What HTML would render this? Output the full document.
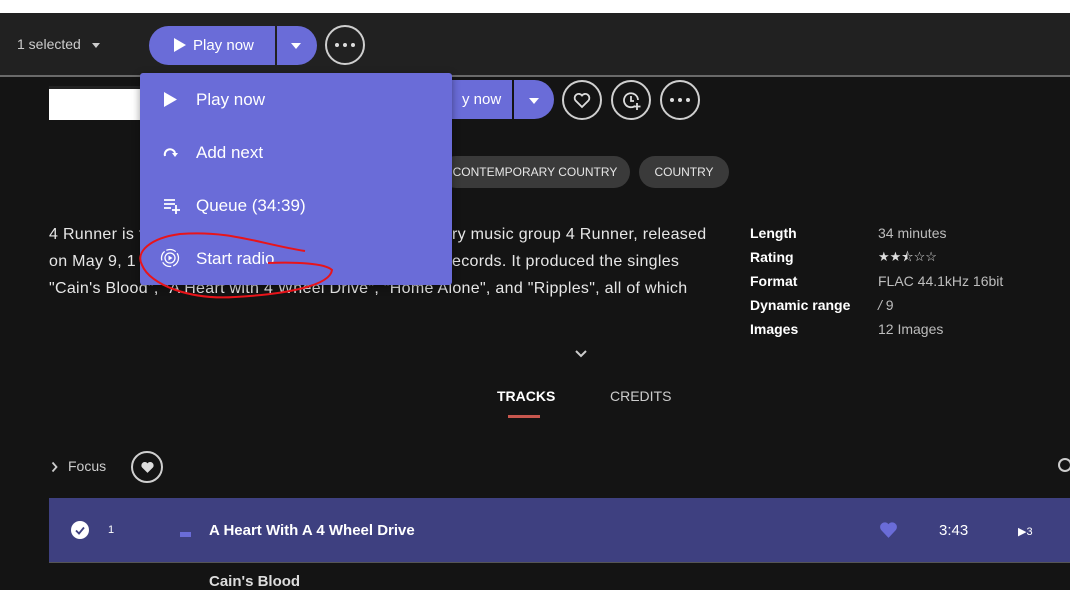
<!DOCTYPE html>
<html><head><meta charset="utf-8"><style>
*{margin:0;padding:0;box-sizing:border-box}
body{width:1070px;height:581px;overflow:hidden;background:#141414;font-family:"Liberation Sans",sans-serif;color:#e6e6e6;position:relative}
.a{position:absolute}
.circ{position:absolute;border:2px solid #cfcfcf;border-radius:50%}
.dots{position:absolute;left:50%;top:50%;transform:translate(-50%,-50%);display:flex;gap:4px}
.dots i{width:4px;height:4px;background:#ddd;border-radius:50%;display:block}
.pill{position:absolute;background:#3a3a3a;border-radius:16px;height:32px;line-height:32px;font-size:12px;color:#e6e6e6;text-align:center}
.mi{position:absolute;left:196px;font-size:17px;color:#fff}
.lab{position:absolute;left:750px;font-size:14px;font-weight:bold;color:#fff}
.val{position:absolute;left:878px;font-size:14px;color:#bdbdbd}
.desc{position:absolute;font-size:16px;color:#e6e6e6;letter-spacing:0.3px;white-space:nowrap}
</style></head><body>
<div class="a" style="left:0;top:0;width:1070px;height:13px;background:#fff"></div>
<div class="a" style="left:49px;top:86px;width:120px;height:34px;background:#fff;border-top:3px solid #222"></div>
<div class="a" style="left:420px;top:80px;width:134px;height:39px;background:#6a6cd8;border-radius:0 20px 20px 0"></div>
<div class="a" style="left:512px;top:80px;width:2px;height:39px;background:#141414"></div>
<div class="a" style="left:462px;top:91px;font-size:15px;color:#fff">y now</div>
<div class="a" style="left:529px;top:98px;border-left:5px solid transparent;border-right:5px solid transparent;border-top:6px solid #fff"></div>
<div class="circ" style="left:562px;top:80px;width:40px;height:40px"><svg class="a" style="left:9px;top:10px" width="18" height="17" viewBox="0 0 18 17"><path d="M9 15 L2.5 8.5 A3.8 3.8 0 0 1 9 3.5 A3.8 3.8 0 0 1 15.5 8.5 Z" fill="none" stroke="#ddd" stroke-width="1.8"/></svg></div>
<div class="circ" style="left:611px;top:80px;width:40px;height:40px"><svg class="a" style="left:8px;top:8px" width="22" height="22" viewBox="0 0 22 22"><path d="M14 16 A7 7 0 1 1 17 10" fill="none" stroke="#ddd" stroke-width="1.8"/><path d="M10 6v5h3M16 13v7M12.5 16.5h7" fill="none" stroke="#ddd" stroke-width="1.8"/></svg></div>
<div class="circ" style="left:660px;top:80px;width:40px;height:40px"><div class="dots"><i></i><i></i><i></i></div></div>
<div class="pill" style="left:440px;top:156px;width:190px">CONTEMPORARY COUNTRY</div>
<div class="pill" style="left:639px;top:156px;width:90px">COUNTRY</div>
<div class="desc" style="left:49px;top:226px">4 Runner is t</div>
<div class="desc" style="left:452px;top:226px">ry music group 4 Runner, released</div>
<div class="desc" style="left:49px;top:253px">on May 9, 1</div>
<div class="desc" style="left:452px;top:253px">ecords. It produced the singles</div>
<div class="desc" style="left:49px;top:280px">"Cain's Blood", "A Heart with 4 Wheel Drive", "Home Alone", and "Ripples", all of which</div>
<div class="lab" style="top:225px">Length</div><div class="val" style="top:225px">34 minutes</div>
<div class="lab" style="top:249px">Rating</div><div class="val" style="top:248px;font-size:13px;letter-spacing:0px;color:#ddd">★★⯪☆☆</div>
<div class="lab" style="top:273px">Format</div><div class="val" style="top:273px">FLAC 44.1kHz 16bit</div>
<div class="lab" style="top:297px">Dynamic range</div><div class="val" style="top:297px"><i>/</i> 9</div>
<div class="lab" style="top:321px">Images</div><div class="val" style="top:321px">12 Images</div>
<svg class="a" style="left:575px;top:350px" width="12" height="8"><path d="M1 1l5 5 5-5" fill="none" stroke="#ccc" stroke-width="2"/></svg>
<div class="a" style="left:497px;top:388px;font-size:14px;font-weight:bold;color:#fff">TRACKS</div>
<div class="a" style="left:508px;top:415px;width:32px;height:3px;background:#c8574e"></div>
<div class="a" style="left:610px;top:388px;font-size:14px;color:#ccc">CREDITS</div>
<svg class="a" style="left:51px;top:461px" width="8" height="12"><path d="M1.5 1.5l4 4.5-4 4.5" fill="none" stroke="#ccc" stroke-width="1.8"/></svg>
<div class="a" style="left:68px;top:458px;font-size:14px;color:#ccc">Focus</div>
<div class="circ" style="left:131px;top:451px;width:32px;height:32px"><svg class="a" style="left:7px;top:7px" width="15" height="15" viewBox="0 0 18 17"><path d="M9 15 L2.5 8.5 A3.8 3.8 0 0 1 9 3.5 A3.8 3.8 0 0 1 15.5 8.5 Z" fill="#ddd"/></svg></div>
<div class="a" style="left:1058px;top:458px;width:14px;height:14px;border:2px solid #ccc;border-radius:50%"></div>
<div class="a" style="left:49px;top:498px;width:1021px;height:65px;background:#3e4080;border-bottom:1px solid #555"></div>
<div class="a" style="left:71px;top:521px;width:18px;height:18px;background:#fff;border-radius:50%"><svg width="18" height="18"><path d="M5 9.5l3 3 5-6" fill="none" stroke="#3e4080" stroke-width="1.8"/></svg></div>
<div class="a" style="left:108px;top:524px;font-size:11px;color:#fff">1</div>
<div class="a" style="left:180px;top:532px;width:11px;height:5px;background:#6a6cd8"></div>
<div class="a" style="left:209px;top:522px;font-size:15px;font-weight:bold;color:#fff">A Heart With A 4 Wheel Drive</div>
<svg class="a" style="left:879px;top:521px" width="19" height="18" viewBox="0 0 18 17"><path d="M9 16 L2 8.5 A3.8 3.8 0 0 1 9 3 A3.8 3.8 0 0 1 16 8.5 Z" fill="#6a6cd8"/></svg>
<div class="a" style="left:939px;top:522px;font-size:15px;color:#fff">3:43</div>
<div class="a" style="left:1018px;top:525px;font-size:11px;color:#fff">▶3</div>
<div class="a" style="left:209px;top:573px;font-size:15px;font-weight:bold;color:#ddd">Cain's Blood</div>
<div class="a" style="left:0;top:13px;width:1070px;height:64px;background:#212121;border-bottom:2px solid #6a6a6a"></div>
<div class="a" style="left:17px;top:36px;font-size:14px;color:#ccc">1 selected</div>
<div class="a" style="left:92px;top:43px;border-left:4px solid transparent;border-right:4px solid transparent;border-top:5px solid #ccc"></div>
<div class="a" style="left:149px;top:26px;width:126px;height:39px;background:#6a6cd8;border-radius:20px 0 0 20px"></div>
<div class="a" style="left:277px;top:26px;width:40px;height:39px;background:#6a6cd8;border-radius:0 20px 20px 0"></div>
<svg class="a" style="left:173px;top:38px" width="13" height="14"><path d="M1 0L13 7 1 14Z" fill="#fff"/></svg>
<div class="a" style="left:193px;top:37px;font-size:15px;color:#fff">Play now</div>
<div class="a" style="left:291px;top:43px;border-left:5px solid transparent;border-right:5px solid transparent;border-top:6px solid #fff"></div>
<div class="circ" style="left:325px;top:25px;width:40px;height:40px"><div class="dots"><i></i><i></i><i></i></div></div>
<div class="a" style="left:140px;top:73px;width:312px;height:212px;background:#6a6cd8;border-radius:3px;box-shadow:0 2px 8px rgba(0,0,0,.4)"></div>
<svg class="a" style="left:164px;top:92px" width="13" height="15"><path d="M0 0L13 7.5 0 15Z" fill="#fff"/></svg>
<div class="mi" style="top:90px">Play now</div>
<svg class="a" style="left:163px;top:146px" width="16" height="14"><path d="M2 10A5 5 0 0 1 12 7" fill="none" stroke="#fff" stroke-width="2"/><path d="M9 7h6l-3 4z" fill="#fff"/></svg>
<div class="mi" style="top:143px">Add next</div>
<svg class="a" style="left:164px;top:198px" width="16" height="16"><path d="M0 2h11M0 6h11M0 10h7M12 7v9M8 12h8" stroke="#fff" stroke-width="1.8"/></svg>
<div class="mi" style="top:196px">Queue (34:39)</div>
<svg class="a" style="left:160px;top:248px" width="20" height="20"><circle cx="10" cy="10" r="8.5" fill="none" stroke="#fff" stroke-width="1.3" stroke-dasharray="10 2"/><circle cx="10" cy="10" r="5" fill="none" stroke="#fff" stroke-width="1.3"/><path d="M8.5 7.5l4 2.5-4 2.5z" fill="#fff"/></svg>
<div class="mi" style="top:249px">Start radio</div>
<svg class="a" style="left:0;top:0" width="1070" height="581"><path d="M305 251 C260 244 230 230 180 234 C150 238 135 252 142 265 C150 285 190 300 235 297 C290 294 330 285 332 270 C325 263 295 262 268 263" fill="none" stroke="#e8141a" stroke-width="2"/></svg>
</body></html>
